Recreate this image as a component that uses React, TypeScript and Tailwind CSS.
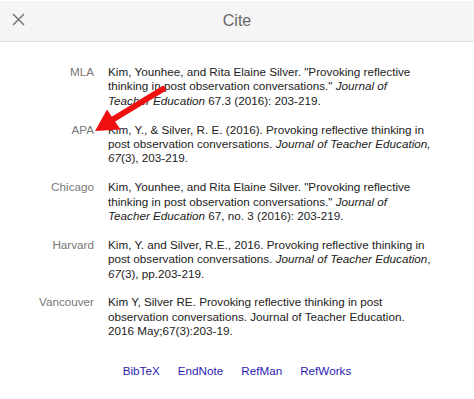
import React from "react"

type Citation = {
    style: string
    lines: React.ReactNode[]
}

const citations: Citation[] = [
    {
        style: "MLA",
        lines: [
            <>Kim, Younhee, and Rita Elaine Silver. "Provoking reflective</>,
            <>thinking in post observation conversations." <i>Journal of</i></>,
            <><i>Teacher Education</i> 67.3 (2016): 203-219.</>,
        ],
    },
    {
        style: "APA",
        lines: [
            <>Kim, Y., &amp; Silver, R. E. (2016). Provoking reflective thinking in</>,
            <>post observation conversations. <i>Journal of Teacher Education,</i></>,
            <><i>67</i>(3), 203-219.</>,
        ],
    },
    {
        style: "Chicago",
        lines: [
            <>Kim, Younhee, and Rita Elaine Silver. "Provoking reflective</>,
            <>thinking in post observation conversations." <i>Journal of</i></>,
            <><i>Teacher Education</i> 67, no. 3 (2016): 203-219.</>,
        ],
    },
    {
        style: "Harvard",
        lines: [
            <>Kim, Y. and Silver, R.E., 2016. Provoking reflective thinking in</>,
            <>post observation conversations. <i>Journal of Teacher Education</i>,</>,
            <><i>67</i>(3), pp.203-219.</>,
        ],
    },
    {
        style: "Vancouver",
        lines: [
            <>Kim Y, Silver RE. Provoking reflective thinking in post</>,
            <>observation conversations. Journal of Teacher Education.</>,
            <>2016 May;67(3):203-19.</>,
        ],
    },
]

const exports = ["BibTeX", "EndNote", "RefMan", "RefWorks"]

export default function App() {
    return (
        <div
            className="relative w-[474px] h-[399px] bg-white overflow-hidden"
            style={{ fontFamily: '"Liberation Sans", Arial, sans-serif' }}
        >
            {/* header */}
            <div className="relative flex items-center justify-center h-[41px] bg-[#f5f5f5] border-b border-[#dedede] mt-px">
                <button className="absolute left-[12px] top-[12px] w-[13px] h-[13px] flex items-center justify-center">
                    <svg width="13" height="13" viewBox="0 0 13 13" fill="none">
                        <path d="M1 1 L12 12 M12 1 L1 12" stroke="#777" strokeWidth="1.5" />
                    </svg>
                </button>
                <h2 className="text-[16px] text-[#666] font-normal leading-none">Cite</h2>
            </div>

            {/* citations */}
            <div className="flex flex-col gap-[14.4px] pt-[23px] text-[11.7px] leading-[14.4px]">
                {citations.map((c) => (
                    <div key={c.style} className="flex gap-[14px]">
                        <div className="w-[94px] shrink-0 text-right text-[#777]">{c.style}</div>
                        <div className="text-[#222] whitespace-nowrap">
                            {c.lines.map((l, i) => (
                                <div key={i}>{l}</div>
                            ))}
                        </div>
                    </div>
                ))}
            </div>

            {/* export links */}
            <div className="flex justify-center gap-[18px] mt-[25px] text-[11.7px] leading-[14.4px]">
                {exports.map((e) => (
                    <a key={e} href="#" className="text-[#2a1db0]">
                        {e}
                    </a>
                ))}
            </div>

            {/* red annotation arrow */}
            <svg className="absolute left-0 top-0 pointer-events-none" width="474" height="399">
                <line x1="163" y1="89" x2="112" y2="120" stroke="#f01010" strokeWidth="6" strokeLinecap="round" />
                <polygon points="95,131 107,109.5 120.5,129.5" fill="#f01010" />
            </svg>
        </div>
    )
}
